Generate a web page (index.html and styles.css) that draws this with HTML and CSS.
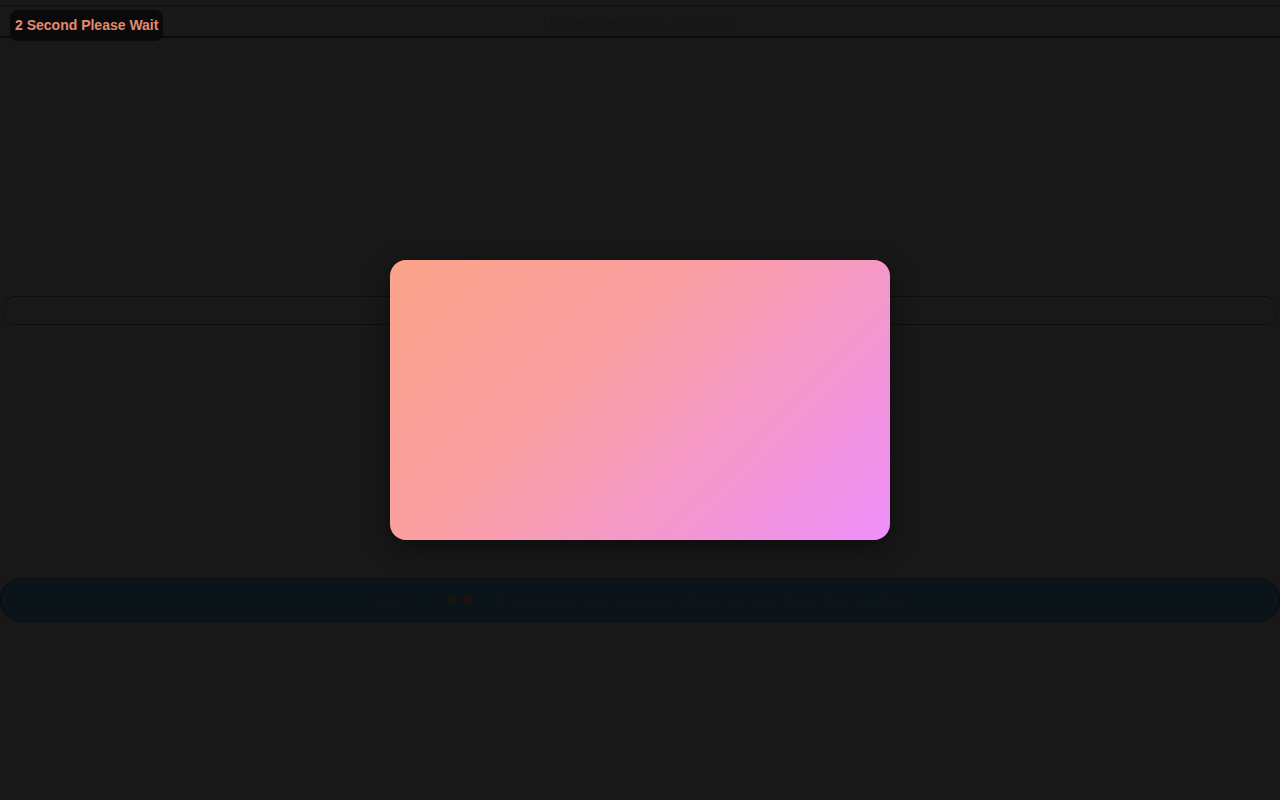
FILE: index.html
```html
<!DOCTYPE html>
<html lang="en">
<head>
<meta charset="utf-8">
<title>Please Wait</title>
<link rel="stylesheet" href="styles.css">
</head>
<body>
<div class="page">
  <div class="topline"></div>
  <header class="header">
    <span class="header-title">Loading your content, please wait</span>
  </header>
  <div class="spacer-top"></div>
  <div class="search-bar"></div>
  <div class="spacer-mid"></div>
  <div class="pill-bar">
    <span class="pill-text pill-lead">Now</span>
    <span class="pill-dot dot-a"></span>
    <span class="pill-dot dot-b"></span>
    <span class="pill-text">Processing your request, please do not close this window</span>
  </div>
</div>
<div class="wait-badge">2 Second Please Wait</div>
<div class="overlay">
  <div class="modal"></div>
</div>
</body>
</html>
```

FILE: styles.css
```css
html, body {
  margin: 0;
  padding: 0;
  background: #181818;
  height: 100%;
  font-family: "Liberation Sans", Arial, sans-serif;
}

.page {
  display: flex;
  flex-direction: column;
  width: 1280px;
  height: 800px;
}

.topline {
  height: 5px;
  border-bottom: 1px solid #0d0d0d;
  background: #191919;
}

.header {
  height: 30px;
  border-bottom: 2px solid #0c0c0c;
  background: #181818;
  display: flex;
  align-items: center;
  justify-content: center;
}

.header-title {
  color: #151515;
  font-size: 13px;
}

.spacer-top {
  height: 258px;
}

.search-bar {
  height: 27px;
  margin: 0 2px;
  border-top: 1px solid #0e0e0e;
  border-bottom: 1px solid #0e0e0e;
  border-radius: 14px;
  background: #181818;
}

.spacer-mid {
  height: 253px;
}

.pill-bar {
  height: 42px;
  border-radius: 22px;
  background: #0b1418;
  border: 1px solid #080a0b;
  display: flex;
  align-items: center;
  justify-content: center;
  gap: 6px;
}

.pill-dot {
  width: 10px;
  height: 10px;
  border-radius: 50%;
}

.dot-a { background: #16160f; }
.dot-b { background: #1e1213; margin-right: 16px; }

.pill-lead { margin-right: 36px; }

.pill-text {
  color: #0d161a;
  font-size: 15px;
  font-weight: bold;
}

.wait-badge {
  position: fixed;
  top: 10px;
  left: 10px;
  padding: 6px 5px 7px 5px;
  background: #0a0a0a;
  color: #e58a6e;
  font-weight: bold;
  font-size: 14px;
  line-height: 18px;
  border-radius: 8px;
  z-index: 20;
}

.overlay {
  position: fixed;
  inset: 0;
  display: flex;
  align-items: center;
  justify-content: center;
  z-index: 10;
}

.modal {
  width: 500px;
  height: 280px;
  border-radius: 16px;
  background: linear-gradient(135deg, #fca38a 0%, #f99fa2 40%, #ef8ffc 100%);
  box-shadow: 0 8px 24px rgba(0, 0, 0, 0.45);
}
```
